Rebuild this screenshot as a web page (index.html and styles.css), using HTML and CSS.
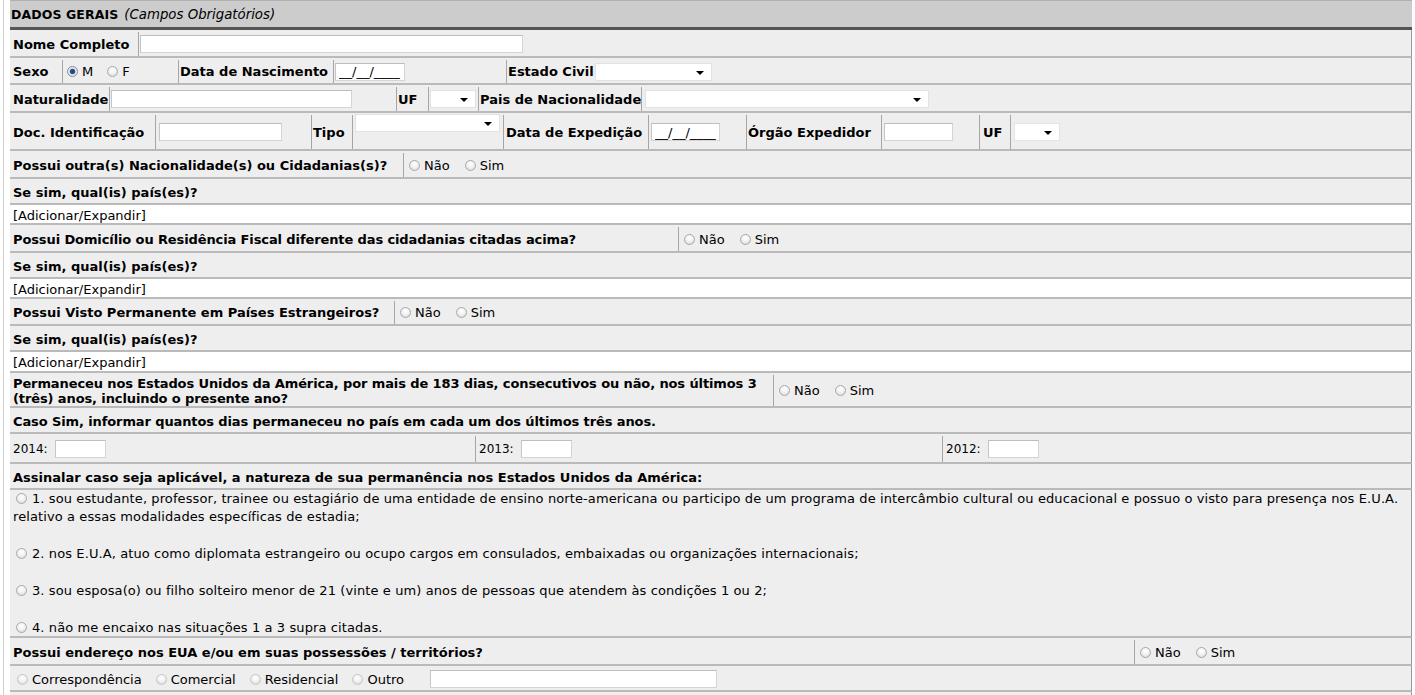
FILE: index.html
```html
<!DOCTYPE html>
<html lang="pt">
<head>
<meta charset="utf-8">
<title>Dados Gerais</title>
<link rel="stylesheet" href="styles.css">
</head>
<body>
<div class="page">
<div class="form">
  <div class="hdr"><b>DADOS GERAIS</b> <i>(Campos Obrigatórios)</i></div>

  <div class="row h28">
    <div class="cell lbl c-nome">Nome Completo</div>
    <div class="cell last c-nome-i"><input class="txt i-nome" type="text"></div>
  </div>

  <div class="row h27">
    <div class="cell lbl c-sexo">Sexo</div>
    <div class="cell c-sexo-r rad">
      <label><input type="radio" name="sexo" checked>M</label>
      <label><input type="radio" name="sexo">F</label>
    </div>
    <div class="cell lbl c-dnasc">Data de Nascimento</div>
    <div class="cell c-dnasc-i"><input class="txt date" type="text" value="__/__/____"></div>
    <div class="cell last lbl c-civil">Estado Civil<span class="sel s-civil"></span></div>
  </div>

  <div class="row h28">
    <div class="cell lbl c-nat">Naturalidade</div>
    <div class="cell c-nat-i"><input class="txt i-nat" type="text"></div>
    <div class="cell lbl c-uf">UF</div>
    <div class="cell c-uf-s"><span class="sel s-uf"></span></div>
    <div class="cell lbl c-pais">Pais de Nacionalidade</div>
    <div class="cell last"><span class="sel s-pais"></span></div>
  </div>

  <div class="row h38">
    <div class="cell lbl c-doc">Doc. Identificação</div>
    <div class="cell c-doc-i"><input class="txt i-doc" type="text"></div>
    <div class="cell lbl c-tipo">Tipo</div>
    <div class="cell c-tipo-s top"><span class="sel s-tipo"></span></div>
    <div class="cell lbl c-dexp">Data de Expedição</div>
    <div class="cell c-dexp-i"><input class="txt date d2" type="text" value="__/__/____"></div>
    <div class="cell lbl c-org">Órgão Expedidor</div>
    <div class="cell c-org-i"><input class="txt i-org" type="text"></div>
    <div class="cell lbl c-uf2">UF</div>
    <div class="cell last"><span class="sel s-uf2"></span></div>
  </div>

  <div class="row h28">
    <div class="cell lbl c-q1">Possui outra(s) Nacionalidade(s) ou Cidadanias(s)?</div>
    <div class="cell last rad yn">
      <label><input type="radio" name="q1">Não</label>
      <label><input type="radio" name="q1">Sim</label>
    </div>
  </div>
  <div class="row h26"><div class="cell last lbl">Se sim, qual(is) país(es)?</div></div>
  <div class="row h20 white"><div class="cell last">[Adicionar/Expandir]</div></div>

  <div class="row h28">
    <div class="cell lbl tight c-q2">Possui Domicílio ou Residência Fiscal diferente das cidadanias citadas acima?</div>
    <div class="cell last rad yn">
      <label><input type="radio" name="q2">Não</label>
      <label><input type="radio" name="q2">Sim</label>
    </div>
  </div>
  <div class="row h26"><div class="cell last lbl">Se sim, qual(is) país(es)?</div></div>
  <div class="row h20 white"><div class="cell last">[Adicionar/Expandir]</div></div>

  <div class="row h27">
    <div class="cell lbl c-q3">Possui Visto Permanente em Países Estrangeiros?</div>
    <div class="cell last rad yn">
      <label><input type="radio" name="q3">Não</label>
      <label><input type="radio" name="q3">Sim</label>
    </div>
  </div>
  <div class="row h26"><div class="cell last lbl">Se sim, qual(is) país(es)?</div></div>
  <div class="row h21 white"><div class="cell last">[Adicionar/Expandir]</div></div>

  <div class="row h35">
    <div class="cell lbl two tight c-q4">Permaneceu nos Estados Unidos da América, por mais de 183 dias, consecutivos ou não, nos últimos 3 (três) anos, incluindo o presente ano?</div>
    <div class="cell last rad yn">
      <label><input type="radio" name="q4">Não</label>
      <label><input type="radio" name="q4">Sim</label>
    </div>
  </div>
  <div class="row h26"><div class="cell last lbl tight">Caso Sim, informar quantos dias permaneceu no país em cada um dos últimos três anos.</div></div>
  <div class="row h30">
    <div class="cell c-y1"><span class="ylbl">2014:</span><input class="txt i-y" type="text"></div>
    <div class="cell c-y2"><span class="ylbl">2013:</span><input class="txt i-y" type="text"></div>
    <div class="cell last"><span class="ylbl">2012:</span><input class="txt i-y" type="text"></div>
  </div>
  <div class="row h26"><div class="cell last lbl">Assinalar caso seja aplicável, a natureza de sua permanência nos Estados Unidos da América:</div></div>
  <div class="row h148">
    <div class="cell last opts">
      <p><input type="radio" name="nat">1. sou estudante, professor, trainee ou estagiário de uma entidade de ensino norte-americana ou participo de um programa de intercâmbio cultural ou educacional e possuo o visto para presença nos E.U.A. relativo a essas modalidades específicas de estadia;</p>
      <p><input type="radio" name="nat">2. nos E.U.A, atuo como diplomata estrangeiro ou ocupo cargos em consulados, embaixadas ou organizações internacionais;</p>
      <p><input type="radio" name="nat">3. sou esposa(o) ou filho solteiro menor de 21 (vinte e um) anos de pessoas que atendem às condições 1 ou 2;</p>
      <p><input type="radio" name="nat">4. não me encaixo nas situações 1 a 3 supra citadas.</p>
    </div>
  </div>
  <div class="row h28">
    <div class="cell lbl c-q5">Possui endereço nos EUA e/ou em suas possessões / territórios?</div>
    <div class="cell last rad yn">
      <label><input type="radio" name="q5">Não</label>
      <label><input type="radio" name="q5">Sim</label>
    </div>
  </div>
  <div class="row h26">
    <div class="cell last rad end">
      <label><input type="radio" name="end">Correspondência</label>
      <label><input type="radio" name="end">Comercial</label>
      <label><input type="radio" name="end">Residencial</label>
      <label><input type="radio" name="end">Outro</label>
      <input class="txt i-outro" type="text">
    </div>
  </div>
  <div class="row h26"><div class="cell last"></div></div>
</div>
</div>
</body>
</html>
```

FILE: styles.css
```css
* { box-sizing: border-box; }
html, body { margin: 0; padding: 0; }
body {
  background: #fff;
  font-family: "DejaVu Sans", Verdana, sans-serif;
  font-size: 13px;
  color: #000;
  overflow: hidden;
}
.page {
  margin-left: 3px;
  border-left: 1px solid #cfcfcf;
  padding-left: 6px;
  height: 695px;
}
.form { width: 1402px; }

.hdr {
  height: 30px;
  background: #ccc;
  border-top: 1px solid #b0b0b0;
  border-bottom: 3px solid #555;
  padding-left: 1px;
  padding-top: 1px;
  display: flex;
  align-items: center;
  gap: 6px;
}
.hdr b { font-size: 12.5px; letter-spacing: 0.1px; }
.hdr i { font-size: 13.3px; }

.row {
  display: flex;
  background: #eee;
  border-bottom: 2px solid #bababa;
  border-right: 1px solid #999;
  padding-top: 2px;
}
.row.white { background: #fff; }
.h20 { height: 20px; }
.h21 { height: 21px; }
.h26 { height: 26px; }
.h27 { height: 27px; }
.h28 { height: 28px; }
.h30 { height: 30px; }
.h35 { height: 35px; }
.h38 { height: 38px; }
.h148 { height: 148px; padding-top: 0; }

.cell {
  display: flex;
  align-items: center;
  padding-left: 3px;
  border-right: 1px solid #a6a6a6;
  flex: none;
  white-space: nowrap;
}
.cell.last { flex: 1; border-right: none; }
.cell.top { align-items: flex-start; }
.lbl { font-weight: bold; }
.tight { letter-spacing: -0.11px; }

/* widths */
.c-nome { width: 129px; }
.c-nome-i { padding-left: 0; }
.c-sexo { width: 53px; }
.c-sexo-r { width: 116px; padding-left: 4px; }
.c-dnasc { width: 155px; padding-left: 1px; }
.c-dnasc-i { width: 173px; padding-left: 1px; }
.c-civil { padding-left: 1px; }
.c-nat { width: 100px; }
.c-nat-i { width: 287px; padding-left: 0; }
.c-uf { width: 32px; padding-left: 1px; }
.c-uf-s { width: 50px; padding-left: 1px; }
.c-pais { width: 163px; padding-left: 1px; }
.c-doc { width: 146px; }
.c-doc-i { width: 156px; }
.c-tipo { width: 41px; padding-left: 1px; }
.c-tipo-s { width: 151px; padding-left: 2px; }
.c-dexp { width: 145px; padding-left: 2px; }
.c-dexp-i { width: 98px; padding-left: 2px; }
.c-org { width: 135px; padding-left: 1px; }
.c-org-i { width: 98px; padding-left: 2px; }
.c-uf2 { width: 31px; padding-left: 3px; }
.c-q1 { width: 394px; }
.c-q2 { width: 669px; }
.c-q3 { width: 385px; }
.c-q4 { width: 764px; }
.c-q5 { width: 1125px; }
.c-y1 { width: 466px; }
.c-y2 { width: 467px; }

.two { white-space: normal; line-height: 15px; }

/* inputs */
.txt {
  height: 18px;
  border: 1px solid #d4d4d4;
  border-top-color: #bdbdbd;
  border-left-color: #c6c6c6;
  background: #fff;
  padding: 0 3px;
  font: 13px "DejaVu Sans", Verdana, sans-serif;
  color: #000;
  margin: 0;
}
.i-nome { width: 383px; margin-left: 1px; }
.i-nat { width: 241px; margin-left: 1px; }
.date { width: 70px; }
.i-doc { width: 123px; }
.i-org { width: 69px; }
.d2 { width: 69px; }
.i-y { width: 51px; }
.i-outro { width: 287px; margin-left: 12px; }

.sel {
  display: inline-block;
  position: relative;
  height: 18px;
  background: #fff;
  border: 1px solid #e2e2e2;
  flex: none;
}
.sel::after {
  content: "";
  position: absolute;
  right: 7px;
  top: 7px;
  border-left: 4px solid transparent;
  border-right: 4px solid transparent;
  border-top: 4px solid #000;
}
.s-civil { width: 117px; margin-left: 1px; }
.s-uf { width: 46px; }
.s-pais { width: 284px; margin-left: 0; }
.s-tipo { width: 145px; margin-top: -1px; }
.s-uf2 { width: 46px; }

/* radios */
input[type="radio"] {
  appearance: none;
  -webkit-appearance: none;
  width: 11px;
  height: 11px;
  margin: 0 4px 0 0;
  border-radius: 50%;
  border: 1px solid #a9a9a9;
  background: radial-gradient(circle at 50% 35%, #fff 0, #f4f4f4 40%, #d2d2d2 100%);
  vertical-align: -1px;
  flex: none;
}
input[type="radio"]:checked {
  background: radial-gradient(circle, #1d3f78 0, #2b5597 2.3px, #dfe6ef 3.2px, #f4f4f4 100%);
  border-color: #8a8a8a;
}
.rad { font-weight: normal; }
.rad label { display: flex; align-items: center; margin-right: 15px; }
.yn { padding-left: 5px; }
.c-sexo-r label { margin-right: 14px; }

.ylbl { font-size: 12px; width: 42px; }

.opts {
  display: block;
  white-space: normal;
  line-height: 18px;
  letter-spacing: 0.1px;
}
.opts p { margin: 0 0 19px 0; }
.opts p input[type="radio"] { margin: 0 5px 0 3px; }
.end label { margin-right: 14px; }
.end label:first-child input[type="radio"] { margin-left: 4px; }
.end input[type="radio"] { border-color: #c6c6c6; }
```
